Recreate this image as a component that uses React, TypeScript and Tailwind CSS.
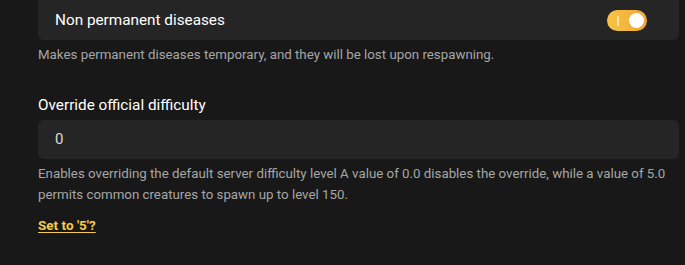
function Toggle({ on }: { on: boolean }) {
  return (
    <button
      type="button"
      className={`relative flex h-[21px] w-[40px] items-center rounded-full px-[3px] ${
        on ? "justify-end bg-gradient-to-r from-[#f7c443] to-[#f0a63a]" : "justify-start bg-[#3a3a3a]"
      }`}
    >
      {on ? <span className="absolute left-[10px] top-[6px] h-[10px] w-[2px] rounded bg-[#fde9a8]" /> : null}
      <span className="h-[15px] w-[15px] rounded-full bg-white" />
    </button>
  );
}

export default function App() {
  return (
    <div
      className="min-h-[265px] bg-[#181818] pl-[38px] pr-[6px] text-[#a6a6a6]"
      style={{ fontFamily: "Roboto, 'Liberation Sans', sans-serif" }}
    >
      <div className="flex h-[40px] items-center justify-between rounded-b-md bg-[#252525] pl-[17px] pr-[32px]">
        <span className="text-[15.3px] text-white">Non permanent diseases</span>
        <Toggle on />
      </div>
      <p className="mt-[4px] text-[13.3px] leading-[21px]">
        Makes permanent diseases temporary, and they will be lost upon respawning.
      </p>

      <label className="mt-[30px] block text-[15.3px] leading-[20px] text-white">Override official difficulty</label>
      <div className="mt-[5px] flex h-[39px] items-center rounded-md bg-[#252525] px-[17px] text-[15px] text-[#dcdcdc]">
        0
      </div>
      <p className="mt-[4px] text-[13.3px] leading-[21px]">
        Enables overriding the default server difficulty level A value of 0.0 disables the override, while a value of 5.0
        permits common creatures to spawn up to level 150.
      </p>
      <a href="#" className="mt-[10px] inline-block text-[13.5px] font-bold leading-[20px] text-[#f7c948] underline underline-offset-2">
        Set to '5'?
      </a>
    </div>
  );
}
